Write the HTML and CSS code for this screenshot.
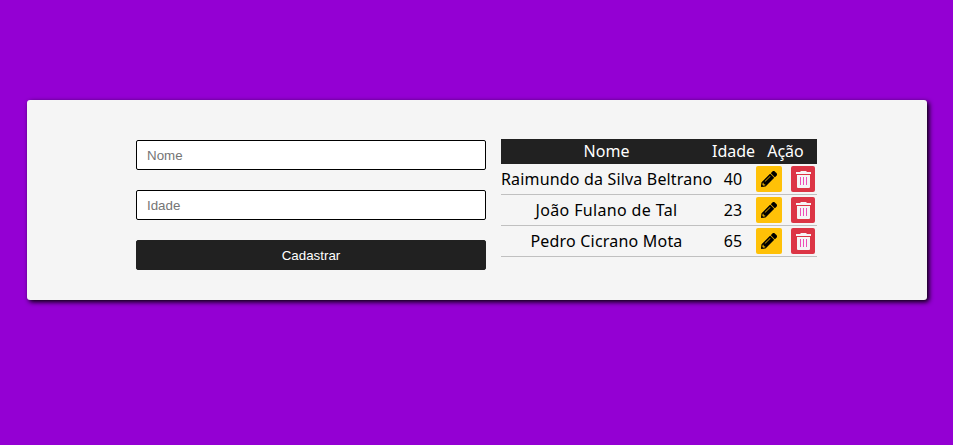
FILE: index.html
```html
<!DOCTYPE html>
<html lang="pt-BR">
<head>
<meta charset="utf-8">
<title>Cadastro</title>
<link rel="stylesheet" href="styles.css">
</head>
<body>
<svg class="sprite" aria-hidden="true">
  <symbol id="pencil" viewBox="0 0 512 512"><path d="M497.900 142.100l-46.100 46.100c-4.700 4.700-12.300 4.700-17 0l-111-111c-4.700-4.700-4.700-12.300 0-17l46.100-46.100c18.700-18.700 49.100-18.700 67.900 0l60.100 60.100c18.800 18.700 18.800 49.100 0 67.900zM284.200 99.800L21.600 362.400.4 483.900c-2.900 16.400 11.400 30.600 27.800 27.800l121.500-21.300 262.600-262.600c4.700-4.700 4.700-12.300 0-17l-111-111c-4.800-4.700-12.400-4.700-17.100 0zM124.100 339.900c-5.500-5.500-5.500-14.300 0-19.800l154-154c5.500-5.500 14.300-5.500 19.800 0s5.500 14.300 0 19.800l-154 154c-5.500 5.500-14.300 5.500-19.800 0zM88 424h48v36.300l-64.500 11.300-31.100-31.100L51.700 376H88v48z"/></symbol>
  <symbol id="trash" viewBox="0 0 15 17"><path d="M5 0h5l1 1h4v2H0V1h4zM1 4h13v12q0 1-1 1H2q-1 0-1-1z"/><path class="slats" d="M4 6h1v8H4zM7 6h1v8H7zM10 6h1v8h-1z"/></symbol>
</svg>
<main class="card">
  <form class="form">
    <input type="text" placeholder="Nome">
    <input type="text" placeholder="Idade">
    <button type="button">Cadastrar</button>
  </form>
  <table class="people">
    <thead><tr><th class="name">Nome</th><th class="age">Idade</th><th class="action">Ação</th></tr></thead>
    <tbody>
      <tr><td>Raimundo da Silva Beltrano</td><td>40</td><td><div class="tools"><span class="edit"><svg><use href="#pencil"/></svg></span><span class="delete"><svg><use href="#trash"/></svg></span></div></td></tr>
      <tr><td>João Fulano de Tal</td><td>23</td><td><div class="tools"><span class="edit"><svg><use href="#pencil"/></svg></span><span class="delete"><svg><use href="#trash"/></svg></span></div></td></tr>
      <tr><td>Pedro Cicrano Mota</td><td>65</td><td><div class="tools"><span class="edit"><svg><use href="#pencil"/></svg></span><span class="delete"><svg><use href="#trash"/></svg></span></div></td></tr>
    </tbody>
  </table>
</main>
</body>
</html>
```
FILE: styles.css
```css
* { box-sizing: border-box; margin: 0; padding: 0; }
body {
  height: 100vh;
  padding: 100px 26px 0 27px;
  background: #9400d3;
  font-family: "Noto Sans", sans-serif;
  font-size: 16px;
}
.sprite { display: none; }
.card {
  display: flex;
  align-items: flex-start;
  gap: 15px;
  width: 900px;
  height: 200px;
  padding: 39px 109px;
  border-radius: 3px;
  background: #f5f5f5;
  box-shadow: 2px 2px 5px #000;
}
.form { display: flex; flex-direction: column; gap: 20px; width: 350px; padding-top: 1px; }
.form input, .form button {
  width: 100%;
  height: 30px;
  border: 1px solid #000;
  border-radius: 2px;
  font: 13.333px "Liberation Sans", sans-serif;
}
.form input { padding: 0 10px; background: #fff; }
.form input::placeholder { color: #757575; }
.form button { border-color: #212121; background: #212121; color: #fff; }
.people { table-layout: fixed; width: 316px; border-collapse: collapse; text-align: center; }
.people th { height: 25px; background: #212121; color: #fff; font-weight: 400; line-height: 25px; }
.name { width: 211px; }
.age { width: 42px; }
.action { width: 63px; }
.people td { height: 31px; box-shadow: inset 0 -1px #c0c0c0; line-height: 29px; white-space: nowrap; }
.people td:first-child { letter-spacing: 0.17px; }
.people tr:nth-child(2) td:first-child { letter-spacing: 0.35px; }
.people tr:nth-child(3) td:first-child { letter-spacing: 0.2px; }
.tools { display: flex; gap: 9px; height: 31px; padding: 2px 2px 3px; }
.edit, .delete { display: flex; align-items: center; justify-content: center; height: 26px; border-radius: 2px; }
.edit { width: 26px; background: #ffc107; }
.delete { width: 24px; background: #dc3545; }
.edit svg { width: 16px; height: 16px; fill: #000; stroke: #000; stroke-width: 8px; overflow: visible; }
.delete svg { width: 15px; height: 17px; fill: #f5f5f5; }
.slats { fill: #ee4db8; }
```
